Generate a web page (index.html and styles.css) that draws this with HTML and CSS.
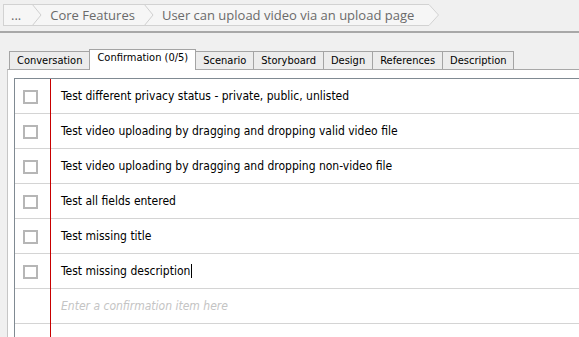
FILE: index.html
```html
<!DOCTYPE html>
<html lang="en">
<head>
    <meta charset="UTF-8">
    <title>Confirmation</title>
    <link rel="stylesheet" href="styles.css">
</head>
<body>
    <!-- Breadcrumb -->
    <div class="crumb-bar">
        <div class="crumbs">
            <span class="crumb first">...</span>
            <svg class="sep" width="16" height="20" viewBox="0 0 16 20"><polyline points="4,-1 13,10 4,21" fill="none" stroke="#cfcfcf" stroke-width="1"/></svg>
            <span class="crumb">Core Features</span>
            <svg class="sep" width="16" height="20" viewBox="0 0 16 20"><polyline points="4,-1 13,10 4,21" fill="none" stroke="#cfcfcf" stroke-width="1"/></svg>
            <span class="crumb last">User can upload video via an upload page</span>
        </div>
        <svg class="crumb-end" width="12" height="22" viewBox="0 0 12 22"><polygon points="0,0.5 1,0.5 10.5,11 1,21.5 0,21.5" fill="#f6f6f6"/><polyline points="0,0.5 1,0.5 10.5,11 1,21.5 0,21.5" fill="none" stroke="#d2d2d2" stroke-width="1"/></svg>
    </div>

    <!-- Tabs -->
    <div class="tabs">
        <div class="tab">Conversation</div>
        <div class="tab active">Confirmation (0/5)</div>
        <div class="tab">Scenario</div>
        <div class="tab">Storyboard</div>
        <div class="tab">Design</div>
        <div class="tab">References</div>
        <div class="tab">Description</div>
    </div>

    <div class="panel">
        <div class="items">
            <div class="row"><span class="check"></span><span class="text">Test different privacy status - private, public, unlisted</span></div>
            <div class="row"><span class="check"></span><span class="text">Test video uploading by dragging and dropping valid video file</span></div>
            <div class="row"><span class="check"></span><span class="text">Test video uploading by dragging and dropping non-video file</span></div>
            <div class="row"><span class="check"></span><span class="text">Test all fields entered</span></div>
            <div class="row"><span class="check"></span><span class="text">Test missing title</span></div>
            <div class="row"><span class="check"></span><span class="text">Test missing description</span><span class="caret"></span></div>
            <div class="row new"><span class="text placeholder">Enter a confirmation item here</span></div>
            <div class="row new"></div>
        </div>
    </div>
</body>
</html>
```

FILE: styles.css
```css
body {
    margin: 0;
    background-color: #f0f0f0;
    font-family: "DejaVu Sans Condensed", "DejaVu Sans", sans-serif;
    overflow: hidden;
}
.crumb-bar {
    display: flex;
    height: 27px;
    padding: 4px 0 0 3px;
    border-bottom: 2px solid #a8a8a8;
}
.crumbs {
    display: flex;
    align-items: center;
    height: 20px;
    width: 424px;
    border: 1px solid #d2d2d2;
    border-right: none;
    background: #f6f6f6;
    font-family: "Open Sans", sans-serif;
    font-size: 13px;
    color: #6a6a6a;
}
.crumb {
    padding: 0 5px 0 6px;
    white-space: nowrap;
}
.crumb.first {
    padding: 0 7px 0 7px;
}
.sep {
    flex: none;
}
.crumb-end {
    flex: none;
}
.tabs {
    display: flex;
    align-items: flex-end;
    height: 20px;
    margin-top: 16px;
    padding-left: 9px;
    font-size: 11px;
    color: #000;
}
.tab {
    height: 17px;
    line-height: 17px;
    padding: 0 7px;
    border: 1px solid #a4a4a4;
    border-bottom: none;
    background: #ececec;
    margin-left: -1px;
}
.tab:first-child {
    margin-left: 0;
}
.tab.active {
    height: 20px;
    line-height: 16px;
    background: #fff;
    position: relative;
    margin-bottom: -1px;
    z-index: 1;
    padding: 0 7px;
}
.panel {
    margin-left: 7px;
    border-left: 1px solid #c6c6c6;
    border-top: 1px solid #a8a8a8;
    background: #fff;
    padding: 8px 0 0 6px;
    height: 260px;
}
.items {
    position: relative;
    border-top: 1px solid #808a92;
    border-left: 1px solid #808a92;
    height: 100%;
    overflow: hidden;
    font-size: 12px;
}
.items::before {
    content: "";
    position: absolute;
    left: 35px;
    top: 0;
    bottom: 0;
    width: 1px;
    background: #c80000;
    z-index: 1;
}
.row {
    display: flex;
    align-items: center;
    box-sizing: border-box;
    height: 35px;
    border-bottom: 1px solid #d4d4d4;
}
.check {
    flex: none;
    width: 15px;
    height: 14px;
    box-sizing: border-box;
    border: 2px solid #b6b6b6;
    margin: 2px 23px 0 8px;
    background: #fff;
}
.text {
    white-space: nowrap;
}
.new .text {
    margin-left: 46px;
}
.placeholder {
    font-style: italic;
    color: #c4c4c4;
}
.caret {
    display: inline-block;
    width: 1px;
    height: 14px;
    background: #000;
    margin-left: 1px;
}
```
